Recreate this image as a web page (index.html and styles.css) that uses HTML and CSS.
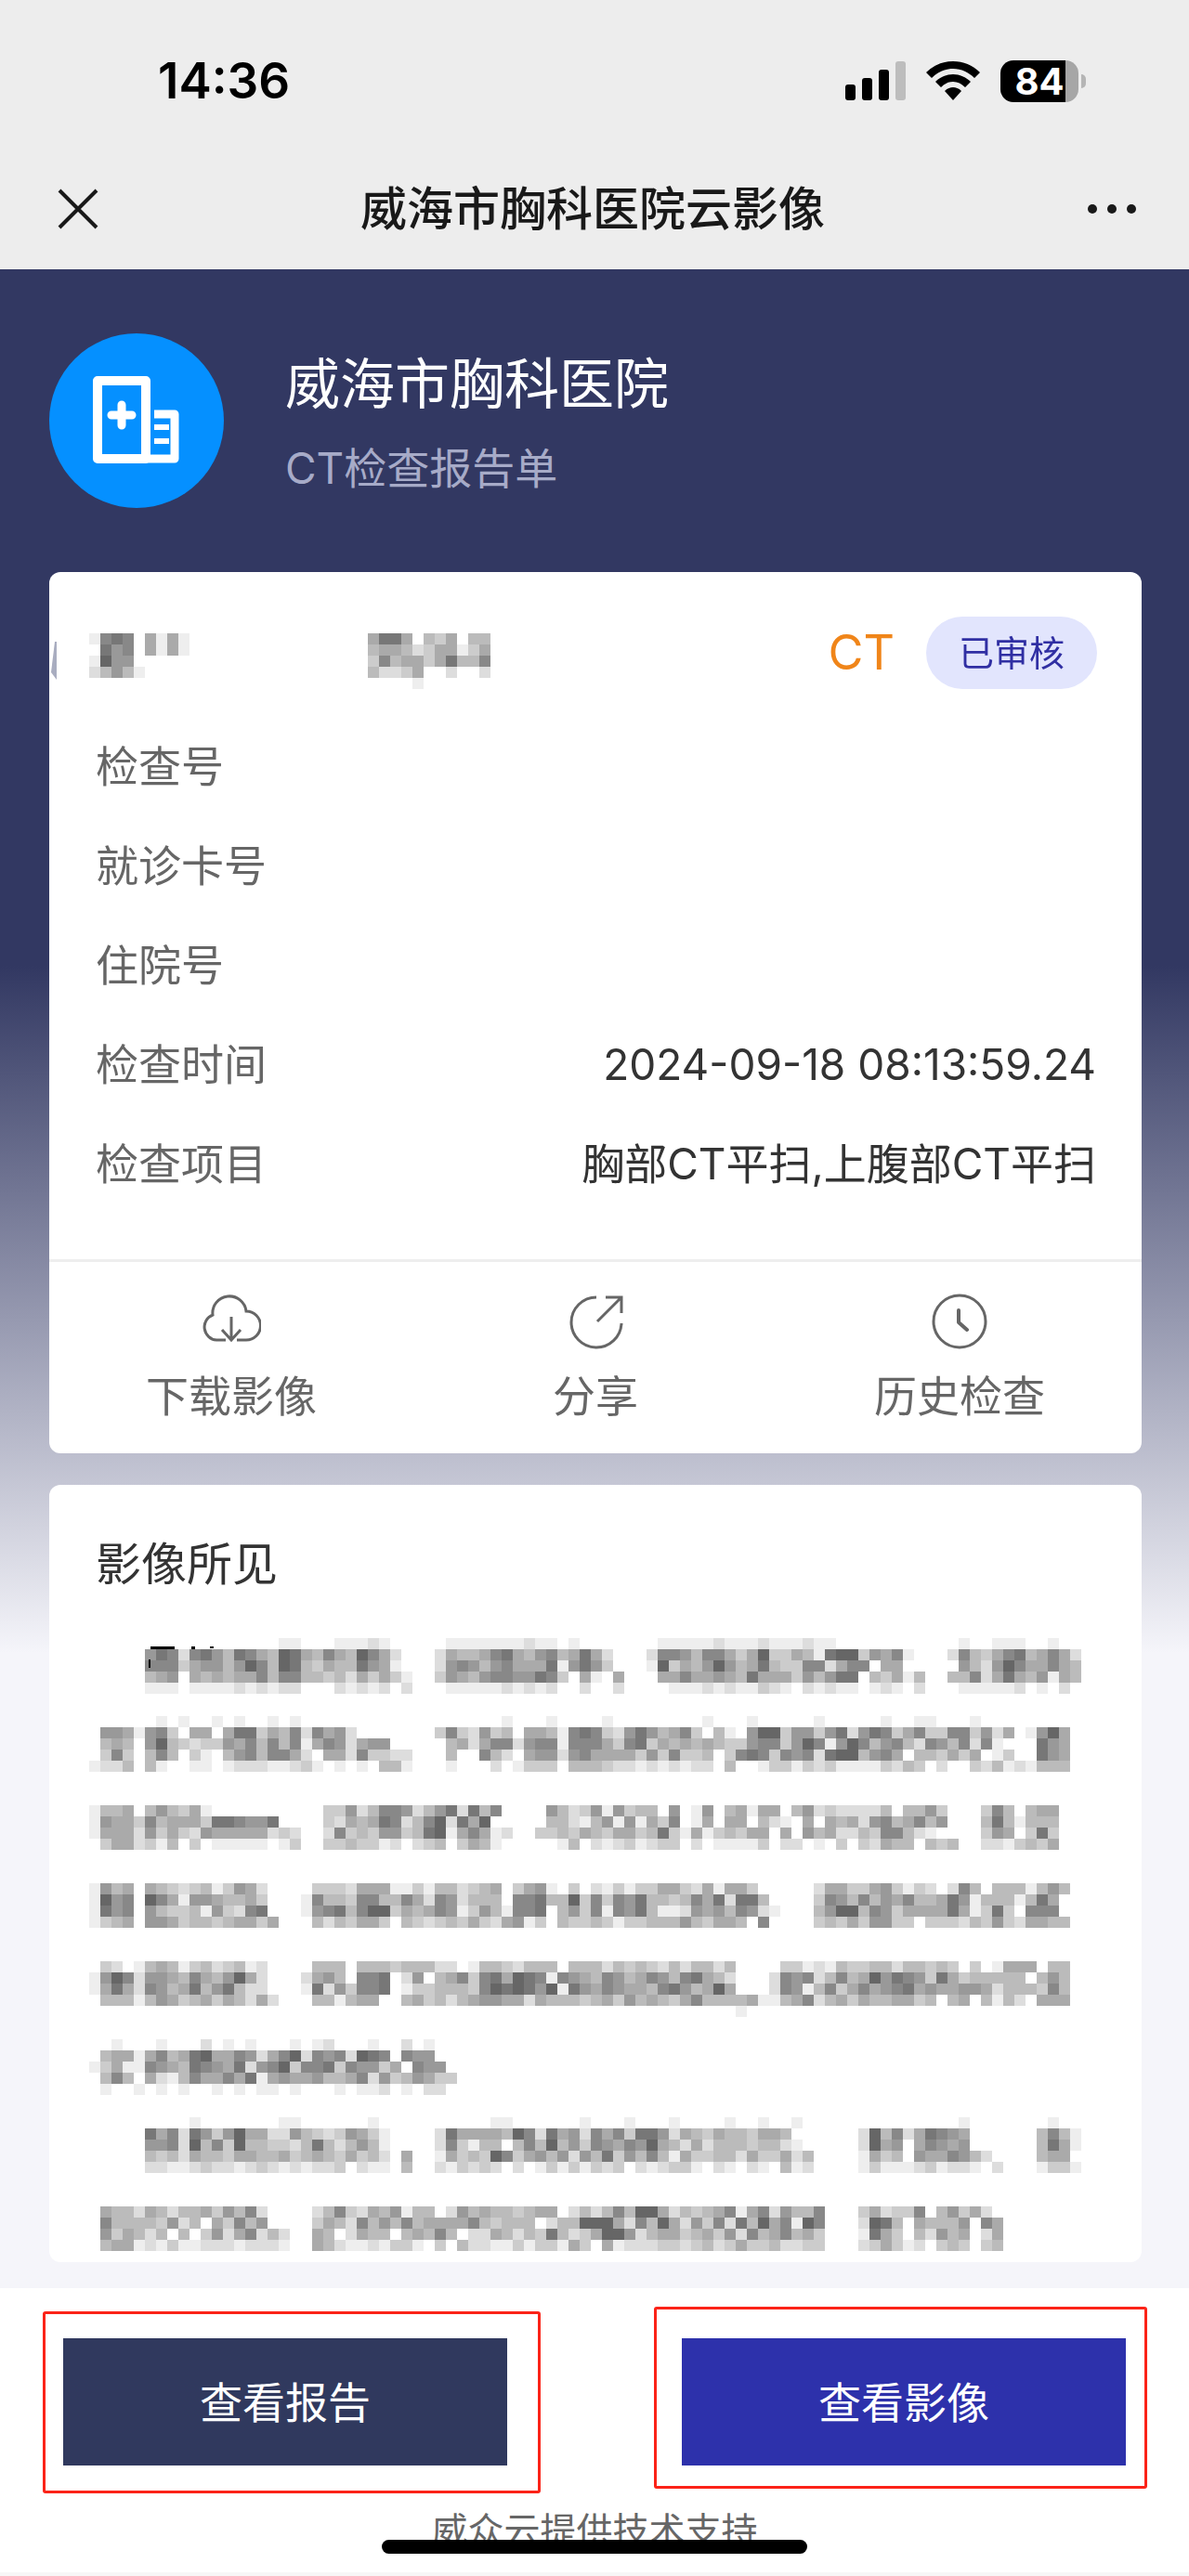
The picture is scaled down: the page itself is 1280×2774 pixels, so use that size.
FILE: index.html
```html
<!DOCTYPE html>
<html lang="zh-CN">
<head>
    <meta charset="UTF-8">
    <meta name="viewport" content="width=device-width, initial-scale=1.0">
    <title>威海市胸科医院云影像</title>
    <link rel="stylesheet" href="styles.css">
</head>
<body>
    <header class="top">
        <div class="status">
            <span class="clock">14:36</span>
            <div class="status-icons">
                <svg width="65" height="42" viewBox="0 0 65 42">
                    <rect x="0" y="25" width="11" height="17" rx="3"/>
                    <rect x="18" y="18" width="11" height="24" rx="3"/>
                    <rect x="36" y="9" width="11" height="33" rx="3"/>
                    <rect x="54" y="0" width="11" height="42" rx="3" fill="#bdbdbd"/>
                </svg>
                <svg width="58" height="42" viewBox="0 0 58 42">
                    <path d="M29 0C18 0 8 4 0 12l6 6c6-6 14-10 23-10s17 4 23 10l6-6C50 4 40 0 29 0z"/>
                    <path d="M29 14c-7 0-14 3-19 8l6 6c4-4 8-6 13-6s9 2 13 6l6-6c-5-5-12-8-19-8z"/>
                    <path d="M29 28c-3 0-6 1-9 4l9 10 9-10c-3-3-6-4-9-4z"/>
                </svg>
                <div class="battery"><span>84</span></div>
            </div>
        </div>
        <nav class="nav">
            <button class="icon-btn" aria-label="关闭">
                <svg width="44" height="44" viewBox="0 0 44 44" fill="none" stroke="#191919" stroke-width="4">
                    <path d="M2 2l40 40M42 2L2 42"/>
                </svg>
            </button>
            <h1>威海市胸科医院云影像</h1>
            <button class="icon-btn" aria-label="更多">
                <svg width="54" height="12" viewBox="0 0 54 12" fill="#191919">
                    <circle cx="6" cy="6" r="5"/>
                    <circle cx="27" cy="6" r="5"/>
                    <circle cx="48" cy="6" r="5"/>
                </svg>
            </button>
        </nav>
    </header>

    <main class="page">
        <section class="hospital">
            <div class="logo">
                <svg width="96" height="96" viewBox="0 0 96 96" fill="none" stroke="#fff">
                    <path d="M6 5h52v84H6z" stroke-width="10" stroke-linejoin="round"/>
                    <path d="M67 41h22v48H58" stroke-width="9" stroke-linejoin="round"/>
                    <path d="M32 31v22M21 42h22" stroke-width="9" stroke-linecap="round"/>
                    <path d="M67 55h16M67 70h16" stroke-width="6"/>
                </svg>
            </div>
            <div>
                <h2>威海市胸科医院</h2>
                <p>CT检查报告单</p>
            </div>
        </section>

        <section class="card">
            <svg class="sliver" width="6" height="41" viewBox="0 0 6 41"><path d="M4 0h2v41L0 33z" fill="#a9adc0"/></svg>
            <div class="patient">
                <canvas id="name" width="108" height="60"></canvas>
                <canvas id="age" width="132" height="60"></canvas>
                <span class="type">CT</span>
                <span class="badge">已审核</span>
            </div>
            <dl class="info">
                <div><dt>检查号</dt><dd></dd></div>
                <div><dt>就诊卡号</dt><dd></dd></div>
                <div><dt>住院号</dt><dd></dd></div>
                <div><dt>检查时间</dt><dd>2024-09-18 08:13:59.24</dd></div>
                <div><dt>检查项目</dt><dd>胸部CT平扫,上腹部CT平扫</dd></div>
            </dl>
            <div class="actions">
                <button>
                    <svg width="64" height="60" viewBox="0 0 64 60" fill="none" stroke="#666" stroke-width="3">
                        <path d="M26 50H16A14 14 0 0 1 12 23A18 18 0 0 1 48 19A15 15 0 0 1 48 50H38"/>
                        <path d="M32 25v25M22 39l10 11 10-11"/>
                    </svg>
                    下载影像
                </button>
                <button>
                    <svg width="64" height="60" viewBox="0 0 64 60" fill="none" stroke="#666" stroke-width="3">
                        <path d="M33 4A27 27 0 1 0 60 32"/>
                        <path d="M34 30L60 4M43 4h17v17"/>
                    </svg>
                    分享
                </button>
                <button>
                    <svg width="64" height="60" viewBox="0 0 64 60" fill="none" stroke="#666" stroke-width="3">
                        <circle cx="32" cy="30" r="28"/>
                        <path d="M31 18v13l9 8" stroke-width="4" stroke-linecap="round" stroke-linejoin="round"/>
                    </svg>
                    历史检查
                </button>
            </div>
        </section>

        <section class="card findings">
            <h3>影像所见</h3>
            <canvas id="findings" width="1080" height="660"></canvas>
        </section>
    </main>

    <footer class="footer">
        <div class="buttons">
            <div class="marked"><button class="report">查看报告</button></div>
            <div class="marked marked-right"><button class="image">查看影像</button></div>
        </div>
        <p>威众云提供技术支持</p>
        <div class="home-bar"></div>
    </footer>

    <script src="script.js"></script>
</body>
</html>
```
FILE: styles.css
```css
* {
    box-sizing: border-box;
    margin: 0;
    padding: 0;
}
body {
    font-family: Inter, "Noto Sans CJK SC", sans-serif;
    font-size: 46px;
    line-height: 60px;
    color: #333;
    background: #f7f7f7;
}
button {
    font: inherit;
    color: inherit;
    border: none;
    background: none;
    cursor: pointer;
}
svg, canvas {
    display: block;
}

/* top bars */
.top {
    background: #ededed;
}
.status {
    height: 160px;
    padding: 14px 119px 0 170px;
    display: flex;
    align-items: center;
    justify-content: space-between;
}
.clock {
    font-size: 53px;
    font-weight: 600;
    color: #000;
}
.status-icons {
    display: flex;
    align-items: center;
    gap: 22px;
}
.battery {
    position: relative;
    width: 84px;
    height: 45px;
    border-radius: 14px;
    background: linear-gradient(to right, #000 70px, #a6a6a6 70px);
    color: #fff;
    font-size: 40px;
    font-weight: 700;
    line-height: 45px;
    text-align: center;
}
.battery::after {
    content: "";
    position: absolute;
    left: 87px;
    top: 15px;
    width: 5px;
    height: 15px;
    border-radius: 0 5px 5px 0;
    background: #b5b5b5;
}
.nav {
    height: 130px;
    padding: 0 56px 0 62px;
    display: flex;
    align-items: center;
    justify-content: space-between;
}
.nav h1 {
    font-size: 50px;
    font-weight: 500;
    color: #191919;
}
.icon-btn {
    padding: 10px 0;
}

/* page */
.page {
    padding: 0 51px 28px 53px;
    background: linear-gradient(#323862 750px, #f5f5fa 1490px);
}
.hospital {
    display: flex;
    align-items: center;
    gap: 66px;
    padding: 69px 0;
    color: #fff;
}
.logo {
    width: 188px;
    height: 188px;
    border-radius: 50%;
    background: #0590ff;
    display: flex;
    align-items: center;
    justify-content: center;
}
.hospital h2 {
    font-size: 59px;
    font-weight: 400;
    line-height: 84px;
}
.hospital p {
    margin-top: 18px;
    color: #a7abc8;
}
.card {
    position: relative;
    background: #fff;
    border-radius: 12px;
    margin-bottom: 34px;
}
.sliver {
    position: absolute;
    left: 2px;
    top: 75px;
}
.patient {
    display: flex;
    align-items: center;
    padding: 48px 48px 30px 43px;
}
.patient canvas {
    margin-top: 18px;
}
#age {
    margin-left: 192px;
}
.type {
    margin-left: auto;
    margin-right: 34px;
    font-size: 52px;
    color: #f08519;
}
.badge {
    padding: 0 35px;
    border-radius: 39px;
    background: #e2e5fd;
    color: #302fa3;
    font-size: 38px;
    line-height: 78px;
}
.info {
    padding: 0 49px 49px 50px;
}
.info div {
    display: flex;
    justify-content: space-between;
    line-height: 107px;
}
.info dt {
    color: #666;
}
.actions {
    display: grid;
    grid-template-columns: repeat(3, 1fr);
    border-top: 3px solid #eee;
    padding: 34px 0 32px;
    color: #666;
}
.actions button {
    display: flex;
    flex-direction: column;
    align-items: center;
    gap: 20px;
}
.findings {
    margin-bottom: 0;
    padding: 50px 43px 12px;
}
.findings h3 {
    padding-left: 7px;
    margin-bottom: 43px;
    font-size: 49px;
    font-weight: 400;
    line-height: 72px;
}

/* bottom bar */
.footer {
    position: relative;
    padding: 54px 68px 15px;
    background: #fff;
    border-bottom: 4px solid #f7f7f7;
}
.buttons {
    display: flex;
    justify-content: space-between;
    gap: 188px;
    color: #fff;
}
.marked {
    position: relative;
    flex: 1;
}
.marked::after {
    content: "";
    position: absolute;
    inset: -29px -36px -30px -22px;
    border: 3px solid #fb2318;
    border-radius: 3px;
    pointer-events: none;
}
.marked-right::after {
    inset: -34px -23px -25px -30px;
}
.marked button {
    width: 100%;
    height: 137px;
}
.report {
    background: #30395e;
}
.image {
    background: #2d31ab;
}
.footer p {
    margin-top: 40px;
    text-align: center;
    font-size: 39px;
    color: #666;
}
.home-bar {
    position: absolute;
    left: 50%;
    bottom: 20px;
    width: 458px;
    height: 15px;
    margin-left: -229px;
    border-radius: 8px;
    background: #000;
}
```
FILE: script.js
```js
// each row is a list of "column:shades", shades are 0-9 (white to dark grey), one per cell
const CELL = 12;

function drawMosaic(id, blocks) {
    const ctx = document.getElementById(id).getContext('2d');
    for (const [top, rows] of blocks) {
        rows.forEach((row, y) => {
            for (const part of row.split(' ')) {
                const [col, shades] = part.split(':');
                [...shades].forEach((c, x) => {
                    if (c === '0') return;
                    const g = 255 - c * 17;
                    ctx.fillStyle = `rgb(${g},${g},${g})`;
                    ctx.fillRect((+col + x) * CELL, (top + y) * CELL, CELL, CELL);
                });
            }
        });
    }
    return ctx;
}

drawMosaic('name', [[0, [
    '0:178705151',
    '0:086705151',
    '0:1966',
    '0:24641'
]]]);

drawMosaic('age', [[0, [
    '0:58850435044',
    '0:45542355135',
    '0:37455358447',
    '0:42235002002',
    '4:1'
]]]);

const ctx = drawMosaic('findings', [
    [0, [
        '17:11 22:11121 32:1111111211 43:1 51:1111121112111211 78:1 81:111 86:1',
        '5:68727864875498547549752 31:2544578546745852 50:277647753593354189936571 77:274357845752',
        '5:77735664697498435448651 31:2676467555816863 50:19354696458433772577055 78:64269755754',
        '5:4560545455747744342535310 31:36546776687305105 50:0557556548555364688043514 77:447258546154',
        '5:111011112121220002121202 31:01111121212002002 50:0011121211321021211012102 77:011111201020'
    ]],
    [7, [
        '6:1 8:1 11:1 13:1 16:1 18:1 37:1 41:1 46:1 55:1 59:1 65:1 71:1 74:11 79:1',
        '1:66516730550588354727562 31:3732634055417873268645730410699366368268735733773625 84:1695',
        '1:45406943233657474715762566 32:45257726771777537835454543367736971697467427647271 85:865',
        '1:3730474031046747752055273322 32:400742056626755553637334037873767289946750443535013 85:865',
        '0:12240410011012221123101010441 32:1000201333044432212121220400133132311113243020032412 84:1444'
    ]],
    [15, [
        '0:14450464351 21:3362477624682847 41:642361634406016045155046232222404463 80:3740455',
        '0:16553745553887668 21:325458724792859 41:442146161537015055042105054526745746 80:4841444',
        '0:15552635326555552 17:32 21:27343663489157512 40:334354355348315134355050645224377421 80:3650383',
        '1:355231403011111013 21:3343312023403541 42:140212312330201111302201030325440434 80:2213435'
    ]],
    [22, [
        '0:1645054323413652 20:33325551131442345035610302131335532515530 65:25533563132027404441464',
        '0:1967097516654453 19:17443774475276244407784493737684434758288400 65:37647465744586144414850',
        '0:18670643341632780 19:16784799354576136417780463717684112656476210 65:46994763555585138307770',
        '0:13450665344345535 20:42435530432343532561304334313344464355407 65:34353663303332436325544'
    ]],
    [29, [
        '1:320145413423412 20:44404443444220144324440444243432424424 62:33121433442443430301555044',
        '0:1697266547546952 19:256407780260457378598717654764576478542 61:276724745968763853444440464',
        '0:15852764584684220 19:182637780133444379898691865765547864595 61:276147357567856556652444374',
        '1:44414653453542520 20:44145500453424566552544434536454357444451 61:145724535445534045041420555',
        '58:1'
    ]],
    [36, [
        '2:1 6:1 10:2 12:1 14:1 18:1 20:12 25:1 28:2 30:1',
        '1:455157458955762579276729870766',
        '0:13511765487658267937783766350766',
        '1:47405214755758156556445726346533',
        '1:1001010100101011010001011201022'
    ]],
    [43, [
        '9:1 17:11 25:1 36:11 44:1 48:1 52:1 57:1 60:1 63:1 78:1 86:1',
        '5:85728636955226432365310 31:285555497285627573886254354435540 69:2947258765 85:4741',
        '5:66729473944332484246410 31:273144047494637657695425244434421 69:2956057656 85:4851',
        '5:434254435544534543534205 31:1534397356462648364741533442533524 69:1534065576420 85:4550',
        '5:221123221232121223021104 31:2132320201313132302123310210210412 69:1311123122102 85:1331'
    ]],
    [51, [
        '1:544254244536472 20:2473254614402645443455024247499524345715726447 69:3523370463520',
        '1:744443624053746 20:3542746474555574344402449995274952637284957197 69:2984054446075',
        '1:635424040362572420 20:5402544045474022542438423599624553453627457453 69:1853042645025',
        '1:455121311222122210 20:5421121331030422113133153051222332342353342233 69:2353120343034'
    ]]
]);

// tops of the first characters
ctx.fillStyle = '#000';
ctx.fillRect(66, 9, 26, 3);
ctx.fillRect(110, 9, 4, 3);
ctx.fillRect(130, 9, 4, 2);
ctx.fillRect(64, 23, 2, 9);
```
